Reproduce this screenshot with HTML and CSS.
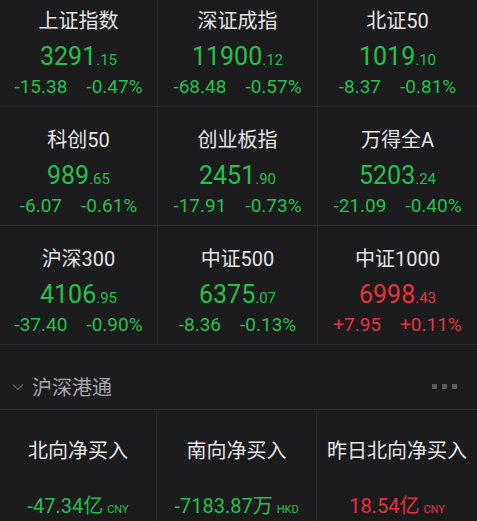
FILE: index.html
```html
<!DOCTYPE html>
<html lang="zh-CN">
<head>
    <meta charset="UTF-8">
    <meta name="viewport" content="width=device-width, initial-scale=1.0">
    <title>行情</title>
    <link rel="stylesheet" href="styles.css">
</head>
<body>

    <div class="index-grid">
        <div class="cell">
            <div class="name">上证指数</div>
            <div class="price down">3291<small>.15</small></div>
            <div class="change down"><span>-15.38</span><span>-0.47%</span></div>
        </div>
        <div class="cell">
            <div class="name">深证成指</div>
            <div class="price down">11900<small>.12</small></div>
            <div class="change down"><span>-68.48</span><span>-0.57%</span></div>
        </div>
        <div class="cell">
            <div class="name">北证50</div>
            <div class="price down">1019<small>.10</small></div>
            <div class="change down"><span>-8.37</span><span>-0.81%</span></div>
        </div>

        <div class="cell">
            <div class="name">科创50</div>
            <div class="price down">989<small>.65</small></div>
            <div class="change down"><span>-6.07</span><span>-0.61%</span></div>
        </div>
        <div class="cell">
            <div class="name">创业板指</div>
            <div class="price down">2451<small>.90</small></div>
            <div class="change down"><span>-17.91</span><span>-0.73%</span></div>
        </div>
        <div class="cell">
            <div class="name">万得全A</div>
            <div class="price down">5203<small>.24</small></div>
            <div class="change down"><span>-21.09</span><span>-0.40%</span></div>
        </div>

        <div class="cell">
            <div class="name">沪深300</div>
            <div class="price down">4106<small>.95</small></div>
            <div class="change down"><span>-37.40</span><span>-0.90%</span></div>
        </div>
        <div class="cell">
            <div class="name">中证500</div>
            <div class="price down">6375<small>.07</small></div>
            <div class="change down"><span>-8.36</span><span>-0.13%</span></div>
        </div>
        <div class="cell">
            <div class="name">中证1000</div>
            <div class="price up">6998<small>.43</small></div>
            <div class="change up"><span>+7.95</span><span>+0.11%</span></div>
        </div>
    </div>

    <div class="section-head">
        <div class="section-title">
            <svg class="chevron" width="14" height="14" viewBox="0 0 14 14">
                <path d="M2 4.5 L7 9.5 L12 4.5" fill="none" stroke="#5e5e60" stroke-width="1.2"/>
            </svg>
            沪深港通
        </div>
        <div class="more"><i></i><i></i><i></i></div>
    </div>

    <div class="flow-grid">
        <div class="flow-cell">
            <div class="name">北向净买入</div>
            <div class="flow-value down">-47.34亿<small>CNY</small></div>
        </div>
        <div class="flow-cell">
            <div class="name">南向净买入</div>
            <div class="flow-value down">-7183.87万<small>HKD</small></div>
        </div>
        <div class="flow-cell">
            <div class="name">昨日北向净买入</div>
            <div class="flow-value up">18.54亿<small>CNY</small></div>
        </div>
    </div>

</body>
</html>
```

FILE: styles.css
```css
body {
    margin: 0;
    background-color: #1c1c1f;
    font-family: Roboto, "Noto Sans CJK SC", sans-serif;
    color: #e2e2e2;
    overflow: hidden;
}

.index-grid {
    display: grid;
    grid-template-columns: 158px 160px 1fr;
    margin-top: -12px;
}

.cell {
    height: 119px;
    border-right: 1px solid #2c2c2f;
    border-bottom: 1px solid #2c2c2f;
    display: flex;
    flex-direction: column;
    align-items: center;
    padding-top: 20px;
    box-sizing: border-box;
}

.cell:nth-child(3n) {
    border-right: none;
}

.name {
    font-size: 20px;
    line-height: 26px;
    color: #e4e4e4;
}

.price {
    font-size: 25px;
    line-height: 30px;
    margin-top: 8px;
}

.price small {
    font-size: 15px;
}

.change {
    display: flex;
    gap: 19px;
    font-size: 19px;
    line-height: 22px;
    margin-top: 1px;
}

.down {
    color: #27c04b;
}

.up {
    color: #e5333c;
}

.section-head {
    height: 65px;
    display: flex;
    align-items: center;
    justify-content: space-between;
    padding: 19px 20px 0 11px;
    box-sizing: border-box;
    border-bottom: 1px solid #2c2c2f;
}

.section-title {
    display: flex;
    align-items: center;
    gap: 7px;
    font-size: 20px;
    color: #a6a6a8;
}

.more {
    display: flex;
    gap: 5px;
}

.more i {
    width: 5px;
    height: 5px;
    background-color: #5a5a5c;
}

.flow-grid {
    display: grid;
    grid-template-columns: 157px 160px 1fr;
}

.flow-cell {
    height: 130px;
    border-right: 1px solid #2c2c2f;
    display: flex;
    flex-direction: column;
    align-items: center;
    padding-top: 28px;
    box-sizing: border-box;
}

.flow-cell:last-child {
    border-right: none;
}

.flow-value {
    font-size: 20px;
    margin-top: 26px;
}

.flow-value small {
    font-size: 11px;
    margin-left: 4px;
}
```
